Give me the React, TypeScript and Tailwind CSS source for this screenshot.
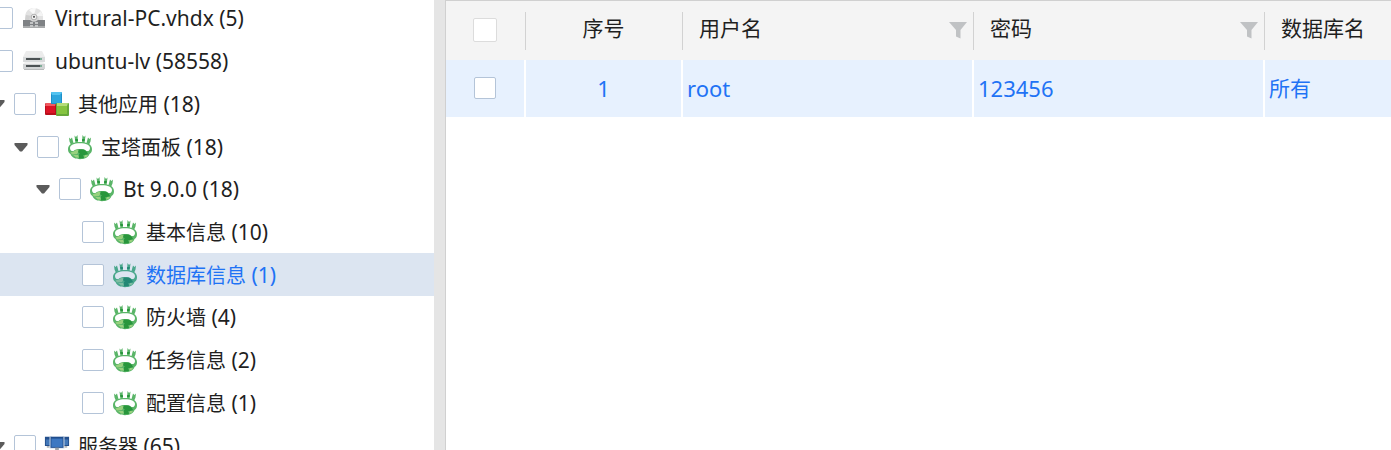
import { useState } from 'react';
import type { ReactNode } from 'react';

type IconKind = 'disk' | 'drive' | 'apps' | 'panel' | 'server';

interface TreeNode {
  id: string;
  label: string;
  count: number;
  depth: number;
  icon: IconKind;
  expandable?: boolean;
  latin?: boolean;
}

const nodes: TreeNode[] = [
  { id: 'vhdx', label: 'Virtural-PC.vhdx', count: 5, depth: 0, icon: 'disk', latin: true },
  { id: 'ubuntu', label: 'ubuntu-lv', count: 58558, depth: 0, icon: 'drive', latin: true },
  { id: 'apps', label: '其他应用', count: 18, depth: 1, icon: 'apps', expandable: true },
  { id: 'panel', label: '宝塔面板', count: 18, depth: 2, icon: 'panel', expandable: true },
  { id: 'bt', label: 'Bt 9.0.0', count: 18, depth: 3, icon: 'panel', expandable: true, latin: true },
  { id: 'basic', label: '基本信息', count: 10, depth: 4, icon: 'panel' },
  { id: 'database', label: '数据库信息', count: 1, depth: 4, icon: 'panel' },
  { id: 'firewall', label: '防火墙', count: 4, depth: 4, icon: 'panel' },
  { id: 'tasks', label: '任务信息', count: 2, depth: 4, icon: 'panel' },
  { id: 'config', label: '配置信息', count: 1, depth: 4, icon: 'panel' },
  { id: 'server', label: '服务器', count: 65, depth: 1, icon: 'server', expandable: true },
];

const indents = ['pl-0', 'pl-[23px]', 'pl-[46px]', 'pl-[68px]', 'pl-[91px]'];

function DiskIcon() {
  return (
    <svg viewBox="0 0 24 24" className="size-6" aria-hidden="true">
      <path d="M3 15 C2 5 7 2 12 2 C17 2 22 5 21 15Z" fill="#e2e2e2" />
      <path d="M12 9 L7 4 L11 2 L14 2Z" fill="#f8f8f8" />
      <path d="M13 10 L19 5 L21 10Z" fill="#f4f4f4" />
      <path d="M3 14 L4 9 L11 10 L8 15Z" fill="#cfcfcf" />
      <path d="M7 15 C7 6 17 6 17 15Z" fill="#d6d6d6" />
      <circle cx="12" cy="11" r="2.8" fill="#f4f4f4" stroke="#a2a2a2" strokeWidth="0.8" />
      <circle cx="12" cy="10.8" r="1.1" fill="#555" />
      <path d="M1 14 H8 Q12 17 16 14 H23 V20 H1Z" fill="#7f8285" />
      <path d="M1 20 H23 V22 H1Z" fill="#a9abac" />
      <path d="M8 16 H11 V18 H8Z M13 16 H16 V18 H13Z M8 19 H11 V21 H8Z M13 19 H16 V21 H13Z" fill="#c3c5c6" />
    </svg>
  );
}

function DriveIcon() {
  return (
    <svg viewBox="0 0 24 24" className="size-6" aria-hidden="true">
      <path d="M4 2 H20 L23 8 H1Z" fill="#ececec" />
      <path d="M1 8 H23 V13 H1Z" fill="#d9dbdc" />
      <path d="M3 13 H21 L23 15 H1Z" fill="#f0f0f0" />
      <path d="M1 15 H23 V20 H1Z" fill="#d2d4d5" />
      <path d="M2 20 H22 V21 H2Z" fill="#b7b9ba" />
      <path d="M4 9 H18 V11 H4Z M4 16 H18 V18 H4Z" fill="#4c5254" />
      <path d="M18 9 H20 V11 H18Z M18 16 H20 V18 H18Z" fill="#7fae98" />
    </svg>
  );
}

function AppsIcon() {
  return (
    <svg viewBox="0 0 26 26" className="size-[26px]" aria-hidden="true">
      <path d="M1 14 Q1 12 2 12 H12 V24 H2 Q1 24 1 23Z" fill="#b80f1c" />
      <path d="M2 12 H12 L11 15 H1Z" fill="#f05a60" />
      <path d="M2 15 H11 V22 H2Z" fill="#dc1426" />
      <path d="M7 3 Q7 1 8 1 H17 Q18 1 18 2 V13 H7Z" fill="#1d8fc9" />
      <path d="M7 2 Q7 1 8 1 H17 Q18 1 18 2 L16 4 H8Z" fill="#53c3f0" />
      <path d="M8 4 H17 V12 H8Z" fill="#2ea6dd" />
      <path d="M12 13 Q12 12 13 12 H24 Q25 12 25 13 V24 Q25 25 24 25 H13 Q12 25 12 24Z" fill="#67a83a" />
      <path d="M13 12 H24 L23 15 H13Z" fill="#b4dc79" />
      <path d="M13 15 H23 V23 H13Z" fill="#86c440" />
    </svg>
  );
}

function PanelIcon({ tinted }: { tinted: boolean }) {
  const dark = tinted ? '#238875' : '#28963c';
  const mid = tinted ? '#4aa78c' : '#5ab568';
  const light = tinted ? '#7dbca2' : '#98d17e';
  const hole = tinted ? '#dce5f1' : '#ffffff';
  return (
    <svg viewBox="0 0 26 26" className="size-[26px]" aria-hidden="true">
      <path d="M2 3.5 L3.5 5 L5 3.5 L6.5 9 L4 11 L2.5 7.5Z" fill={mid} />
      <path d="M24 3.5 L22.5 5 L21 3.5 L19.5 9 L22 11 L23.5 7.5Z" fill={mid} />
      <path d="M7.5 1.5 L9 3 L10.5 1 L11 9 L8.5 9.5Z" fill={mid} />
      <path d="M18.5 1.5 L17 3 L15.5 1 L15 9 L17.5 9.5Z" fill={mid} />
      <path d="M8.2 5 H10.8 L11 7 H8.5Z M17.8 5 H15.2 L15 7 H17.5Z" fill={dark} />
      <path d="M13 8 C20 8 25 10.5 25 15 C25 18 24 19 22.5 20 C21.5 23.5 17 25.2 13 25.2 C9 25.2 4.5 23.5 3.5 20 C2 19 1 18 1 15 C1 10.5 6 8 13 8Z" fill={mid} />
      <path d="M13 9.3 C19 9.3 23 11 23 14 C23 16.2 21.5 17.5 19.5 17 C18 15.5 16 15 13 15 C10 15 8 15.5 6.5 17 C4.5 17.5 3 16.2 3 14 C3 11 7 9.3 13 9.3Z" fill={hole} />
      <path d="M3.5 18.5 L7.5 17 L10 15.5 L12 17 L10 20 L5 20.5Z" fill={light} />
      <path d="M12 15.5 H17 L20 18 L21 20 L18 21 H14 L11 18Z" fill={dark} />
      <path d="M6 21 H11 L12 23.5 L9 23.5Z M18 21 H21 L19.5 23 L17 23.5Z" fill={light} />
      <path d="M12 20 L16 20 L17 24 L12 24.5Z" fill={dark} />
    </svg>
  );
}

function ServerIcon() {
  return (
    <svg viewBox="0 0 28 26" className="h-[26px] w-7" aria-hidden="true">
      <path d="M1 3 H8 V13 H1Z M20 3 H27 V13 H20Z" fill="#244f8c" />
      <path d="M2 6 H7 V12 H2Z M21 6 H26 V12 H21Z" fill="#4277b8" />
      <path d="M6 3 H22 V16 H6Z" fill="#dbe5f1" />
      <path d="M7 3 H21 V15 H7Z" fill="#1f4d8d" />
      <path d="M8 5 H20 V14 H8Z" fill="#3d78c2" />
      <path d="M12 15 H16 V18 H20 V20 H8 V18 H12Z" fill="#9da3a9" />
      <path d="M3 13 H6 V15 H3Z M22 13 H25 V15 H22Z" fill="#b4b8bc" />
    </svg>
  );
}

function NodeIcon({ kind, selected }: { kind: IconKind; selected: boolean }) {
  const icons: Record<IconKind, ReactNode> = {
    disk: <DiskIcon />,
    drive: <DriveIcon />,
    apps: <AppsIcon />,
    panel: <PanelIcon tinted={selected} />,
    server: <ServerIcon />,
  };
  return <span className="ml-2 flex w-[26px] shrink-0 justify-center">{icons[kind]}</span>;
}

function FilterIcon() {
  return (
    <svg viewBox="0 0 18 18" className="h-[18px] w-[18px]" aria-hidden="true">
      <path d="M0 1 H18 L11.5 9 V17.5 L7 15.5 V9Z" fill="#c0c2c4" />
    </svg>
  );
}

const boxBase = 'block shrink-0 appearance-none rounded-[2px] bg-white checked:bg-[#1f6ff5]';

function FilterHeader({ children }: { children: ReactNode }) {
  return (
    <div className="flex items-center justify-between pr-[7px] pl-4">
      <span className="pb-1">{children}</span>
      <button type="button" aria-label={`筛选${children}`}>
        <FilterIcon />
      </button>
    </div>
  );
}

function Divider() {
  return <span className="absolute top-[11px] right-0 h-[38px] w-px bg-[#d2d2d2]" />;
}

export default function App() {
  const [selected, setSelected] = useState('database');

  return (
    <div className="flex h-screen overflow-hidden bg-white font-['Noto_Sans','Noto_Sans_CJK_SC',sans-serif] text-[#1f1f1f]">
      <nav className="w-[434px] shrink-0 overflow-hidden">
        <ul className="-mt-[3px] grid h-[470px] auto-rows-fr text-[20px] leading-7">
          {nodes.map((node) => {
            const active = node.id === selected;
            return (
              <li key={node.id} className={active ? 'bg-[#dce5f1] text-[#1f73f5]' : ''}>
                <div className={`-ml-8 flex h-full items-center ${indents[node.depth]}`}>
                  <span className="flex w-[23px] shrink-0">
                    {node.expandable && (
                      <button type="button" aria-label={`折叠${node.label}`}>
                        <svg viewBox="0 0 14 10" className="h-[10px] w-[14px]" aria-hidden="true">
                          <path d="M0.5 1 H13.5 V3 L8 9.5 H6 L0.5 3Z" fill="#5b5b5b" />
                        </svg>
                      </button>
                    )}
                  </span>
                  <input
                    type="checkbox"
                    aria-label={node.label}
                    className={`${boxBase} size-[22px] border border-[#b4c4d8]`}
                  />
                  <NodeIcon kind={node.icon} selected={active} />
                  <button
                    type="button"
                    onClick={() => setSelected(node.id)}
                    className="ml-2 pt-px text-left whitespace-nowrap"
                  >
                    <span className={node.latin ? 'text-[21px]' : ''}>{node.label}</span>
                    <span className="text-[21px]"> ({node.count})</span>
                  </button>
                </div>
              </li>
            );
          })}
        </ul>
      </nav>

      <div className="w-[11px] shrink-0 bg-[#e5e5e5]" />

      <main className="min-w-0 flex-1 overflow-hidden border-t border-l border-[#d0d0d0]">
        <table className="w-full table-fixed border-separate border-spacing-0 text-[21px] leading-7">
          <colgroup>
            <col className="w-20" />
            <col className="w-[157px]" />
            <col className="w-[291px]" />
            <col className="w-[291px]" />
            <col />
          </colgroup>
          <thead className="bg-[#f4f4f4]">
            <tr className="h-[59px]">
              <th className="relative p-0 pr-[2px] pb-[2px]">
                <input
                  type="checkbox"
                  aria-label="全选"
                  className={`${boxBase} mx-auto size-6 border border-[#dcdcdc]`}
                />
                <Divider />
              </th>
              <th className="relative p-0 pr-[2px] pb-[2px] font-normal">
                <div className="pb-1">序号</div>
                <Divider />
              </th>
              <th className="relative p-0 pb-[2px] font-normal">
                <FilterHeader>用户名</FilterHeader>
                <Divider />
              </th>
              <th className="relative p-0 pb-[2px] font-normal">
                <FilterHeader>密码</FilterHeader>
                <Divider />
              </th>
              <th className="p-0 pb-[2px] text-left font-normal">
                <div className="pb-1 pl-4">数据库名</div>
              </th>
            </tr>
          </thead>
          <tbody>
            <tr className="h-[57px] bg-[#e7f1fe] text-[#1f73f5]">
              <td className="border-r-2 border-white p-0 pb-[2px]">
                <input
                  type="checkbox"
                  aria-label="选择第 1 行"
                  className={`${boxBase} mx-auto size-[22px] border border-[#b4c4d8]`}
                />
              </td>
              <td className="border-r-2 border-white p-0 pb-[2px] text-center text-[22px]">1</td>
              <td className="border-r-2 border-white p-0 pb-[2px] pl-1 text-[22px]">root</td>
              <td className="border-r-2 border-white p-0 pb-[2px] pl-1 text-[22px]">123456</td>
              <td className="p-0 pb-[2px] pl-1">所有</td>
            </tr>
          </tbody>
        </table>
      </main>
    </div>
  );
}
